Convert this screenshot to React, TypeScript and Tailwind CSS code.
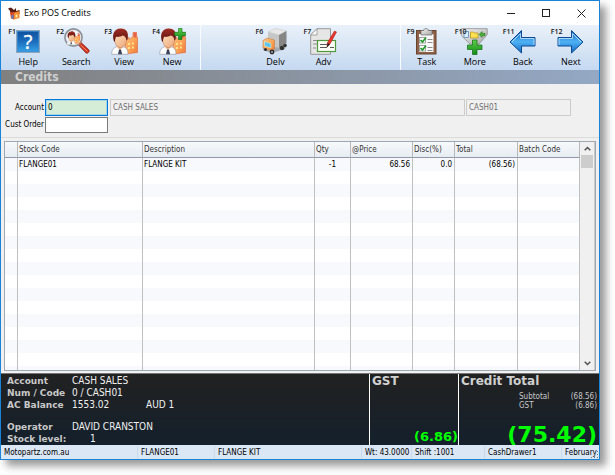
import React from "react";

const tahoma = "font-['DejaVu_Sans_Condensed','DejaVu_Sans',sans-serif]";
const segoe = "font-['Open_Sans','Noto_Sans',sans-serif]";
const verdana = "font-['DejaVu_Sans',sans-serif]";

function Gradients() {
  return (
    <svg width="0" height="0" className="absolute" aria-hidden="true">
      <defs>
        <linearGradient id="blueTile" x1="0" y1="0" x2="0" y2="1">
          <stop offset="0" stopColor="#0f4f9c" />
          <stop offset="0.5" stopColor="#1b6dbd" />
          <stop offset="1" stopColor="#3aa5e8" />
        </linearGradient>
        <linearGradient id="arrowBlue" x1="0" y1="0" x2="0" y2="1">
          <stop offset="0" stopColor="#0f5cb4" />
          <stop offset="0.5" stopColor="#4fb2f5" />
          <stop offset="1" stopColor="#1468c0" />
        </linearGradient>
        <linearGradient id="orange" x1="0" y1="0" x2="1" y2="1">
          <stop offset="0" stopColor="#ffc98a" />
          <stop offset="0.5" stopColor="#fba85a" />
          <stop offset="1" stopColor="#ee7a38" />
        </linearGradient>
        <linearGradient id="skin" x1="0" y1="0" x2="1" y2="1">
          <stop offset="0" stopColor="#ffe0c0" />
          <stop offset="1" stopColor="#eba577" />
        </linearGradient>
        <linearGradient id="hair" x1="0" y1="0" x2="0" y2="1">
          <stop offset="0" stopColor="#a02c24" />
          <stop offset="1" stopColor="#5a1210" />
        </linearGradient>
        <linearGradient id="steel" x1="0" y1="0" x2="1" y2="1">
          <stop offset="0" stopColor="#f4f4f4" />
          <stop offset="1" stopColor="#a8a8a8" />
        </linearGradient>
        <linearGradient id="plus" x1="0" y1="0" x2="0" y2="1">
          <stop offset="0" stopColor="#5fd04a" />
          <stop offset="1" stopColor="#128a18" />
        </linearGradient>
      </defs>
    </svg>
  );
}

function Svg({ children }: { children: React.ReactNode }) {
  return (
    <svg width="27" height="27" viewBox="0 0 27 27" aria-hidden="true">
      {children}
    </svg>
  );
}

function Person() {
  return (
    <g>
      <path d="M14 13l4-4v2.500l4-3V4.500h3.500v4l1 .5v15.500L15 26z" fill="url(#orange)" stroke="#e0683a" strokeWidth="0.600" />
      <path d="M22.500 4.500h3v5h-3z" fill="#e8604a" />
      <path d="M17 15h2v2h-2zM21 14.500h2v2h-2zM17 19h2v2h-2zM21 18.500h2v2h-2z" fill="#ffe08c" />
      <path d="M.7 26.300c0-4.500 1.500-6.300 5.300-7.800h6c3.500 1.300 5 3.300 5 7.800z" fill="#fdfdfd" stroke="#9aa0a8" strokeWidth="0.700" />
      <path d="M5.500 18.500l3.500 3.500 3.500-3.500-1-2.500h-5z" fill="#eeb086" />
      <path d="M8 21.500h2l1.200 4.800H7z" fill="#3c4658" />
      <path d="M3.500 8C3 15 5.500 19.500 9.500 19.500c4 0 6.500-4 6.500-11.500C13 5 6 5 3.500 8z" fill="url(#skin)" stroke="#b8704a" strokeWidth="0.500" />
      <path d="M3 13.500C.5 6 3.500.5 9.500.5c6.500 0 8.500 4.500 7 11l-1 1C15 9.500 14 8 11.500 7.500 9.500 9 7 9 5 8.800 4.500 10.500 4 11.500 4 13.500z" fill="url(#hair)" />
    </g>
  );
}

function HelpIcon() {
  return (
    <Svg>
      <rect x="1.500" y="2.500" width="23" height="22" fill="url(#blueTile)" stroke="#8fa6bd" />
      <rect x="2.500" y="3.500" width="21" height="20" fill="none" stroke="#3e8fd6" strokeWidth="0.700" />
      <text x="13" y="21" textAnchor="middle" fontSize="20" fontFamily="Noto Sans, sans-serif" fill="#fff" stroke="#fff" strokeWidth="0.300">
        ?
      </text>
    </Svg>
  );
}

function SearchIcon() {
  return (
    <Svg>
      <path d="M15.500 17l2.500-2.500 8 7.500c1 1.500-1.500 4-3 3z" fill="#d0301c" stroke="#84190e" strokeWidth="0.700" />
      <path d="M17.500 17l7 6.500" stroke="#f39a7c" />
      <circle cx="10.500" cy="9.500" r="8.500" fill="#eef5fb" stroke="#8a9098" strokeWidth="1.800" />
      <g transform="translate(3.500 3) scale(0.520)">
        <Person />
      </g>
      <circle cx="10.500" cy="9.500" r="7.300" fill="none" stroke="#e3e6ea" strokeWidth="0.900" />
    </Svg>
  );
}

function ViewIcon() {
  return (
    <Svg>
      <Person />
    </Svg>
  );
}

function NewIcon() {
  return (
    <Svg>
      <Person />
      <path d="M19.500.5h3.500v3.800h3.700v3.400H23V11.500h-3.500V7.700h-4V4.300h4z" fill="url(#plus)" stroke="#0f6b14" strokeWidth="0.600" />
    </Svg>
  );
}

function DeliveryIcon() {
  return (
    <Svg>
      <path d="M6 20l17-2 2-3-2 6-13 4z" fill="#6d6d6d" opacity="0.500" />
      <path d="M6 4l8-3.500L24.500 3 17 7z" fill="#e8e8e8" stroke="#b5b5b5" strokeWidth="0.400" />
      <path d="M6 4l11 3v13L6 16z" fill="#c6c6c6" />
      <path d="M17 7l7.500-4v12L17 21z" fill="#868686" />
      <circle cx="20" cy="20" r="2.200" fill="#333" />
      <circle cx="23" cy="17.500" r="1.800" fill="#333" />
      <path d="M1 12.500L5 10l7.500 2v9L9.500 23 1 20z" fill="url(#orange)" stroke="#b87432" strokeWidth="0.500" />
      <path d="M2.500 13.500l6.500 2v4.500l-6.500-2z" fill="#59c6ee" stroke="#fff3c0" strokeWidth="0.500" />
      <path d="M1 20l8.500 3 3-2v2l-3 2L1 22z" fill="#a6a6a6" />
      <circle cx="10" cy="24" r="2.400" fill="#2c2c2c" />
      <circle cx="10" cy="24" r="0.900" fill="#bbb" />
      <circle cx="3.500" cy="21.500" r="1.500" fill="#2c2c2c" />
    </Svg>
  );
}

function AdviceIcon() {
  return (
    <Svg>
      <path d="M7 .7h13.500v25.600H.7V7z" fill="#e6e6e6" stroke="#8f8f8f" strokeWidth="0.900" />
      <path d="M7 .7V7H.7z" fill="#fff" stroke="#8f8f8f" strokeWidth="0.800" />
      <path d="M3 12.500h5M3 16h4M3 20h3" stroke="#8e8e8e" />
      <rect x="7.500" y="12.500" width="18" height="11" fill="#fbfff8" stroke="#4f9a3a" strokeWidth="1.200" />
      <path d="M10 16.500h7M10 19.500h7M20 19.500h4" stroke="#5a5a5a" />
      <path d="M24.500 3l2 1-6.500 12-3 3 .5-4.500z" fill="#e8342c" stroke="#a8150e" strokeWidth="0.500" />
      <path d="M17.500 15l2.400 1.300-3 3.200z" fill="#222" />
    </Svg>
  );
}

function TaskIcon() {
  return (
    <Svg>
      <rect x="3.500" y="2.500" width="19.500" height="23.500" fill="#8f6248" stroke="#68442e" />
      <rect x="6" y="6" width="14.500" height="18" fill="#fafafa" />
      <path d="M8 2.500h2.500C10.500 0 15.500 0 15.500 2.500H19V7H8z" fill="url(#steel)" stroke="#6b6b6b" strokeWidth="0.700" />
      <rect x="6.500" y="9.500" width="6" height="5.500" fill="#fff" stroke="#8d8d8d" strokeWidth="0.800" />
      <rect x="6.500" y="17.500" width="6" height="5.500" fill="#fff" stroke="#8d8d8d" strokeWidth="0.800" />
      <path d="M7.500 12l2 2 3.500-4.500M7.500 20l2 2 3.500-4.500" fill="none" stroke="#1f9a28" strokeWidth="1.700" />
      <path d="M14.500 11.500h5M14.500 14.500h5M14.500 19.500h5M14.500 22.500h5" stroke="#8d8d8d" />
    </Svg>
  );
}

function MoreIcon() {
  return (
    <Svg>
      <path d="M.7.7h25.500v6L18 16H9L.7 8z" fill="url(#steel)" stroke="#8b8b8b" strokeWidth="0.800" />
      <rect x="3" y="3.500" width="4.500" height="6" fill="#d6efff" stroke="#4b7fae" strokeWidth="0.700" />
      <path d="M9.500 4h3l1 1h3.500v5H9.500z" fill="#ffe052" stroke="#b38d12" strokeWidth="0.700" />
      <path d="M18 6.500l3-3v1.800h3v2.500h-3v1.800z" fill="#4cae38" stroke="#1d6d14" strokeWidth="0.500" />
      <path d="M11.500 12h4.500v5h5v4.500h-5v5h-4.500v-5h-5V17h5z" fill="url(#plus)" stroke="#0f6b14" strokeWidth="0.700" />
    </Svg>
  );
}

function BackIcon() {
  return (
    <Svg>
      <path d="M1 14L12.500 2.500V9.500H26v8.500H12.500V25z" fill="url(#arrowBlue)" stroke="#0d4a96" />
      <path d="M3 14l8.500-8.500v5H25v6.500" fill="none" stroke="#c4e6ff" strokeWidth="0.800" />
    </Svg>
  );
}

function NextIcon() {
  return (
    <Svg>
      <path d="M26 14L14.500 2.500V9.500H1v8.500H14.500V25z" fill="url(#arrowBlue)" stroke="#0d4a96" />
      <path d="M2 17v-6.500h13.500v-5L24 14" fill="none" stroke="#c4e6ff" strokeWidth="0.800" />
    </Svg>
  );
}

function AppIcon() {
  return (
    <svg width="12" height="13" viewBox="0 0 12 13" aria-hidden="true">
      <path d="M0 1.500l3-1L6 3l2-2v3l3.500-1v4L3 8 2 4z" fill="#5a1c12" />
      <path d="M2 5.500l4-.5v7.500l-3-1z" fill="#e0482a" />
      <path d="M6 5.500l5.500-1.500v7L6 12.500z" fill="#f08a2c" />
      <path d="M3.500 8h2v3.500h-2z" fill="#4a86c8" />
      <path d="M7.500 7.500h2v3h-2z" fill="#ffe9b0" />
    </svg>
  );
}

type Tool = { fkey: string; label: string; icon: React.ReactNode };

const toolGroups: Tool[][] = [
  [
    { fkey: "F1", label: "Help", icon: <HelpIcon /> },
    { fkey: "F2", label: "Search", icon: <SearchIcon /> },
    { fkey: "F3", label: "View", icon: <ViewIcon /> },
    { fkey: "F4", label: "New", icon: <NewIcon /> },
  ],
  [
    { fkey: "F6", label: "Delv", icon: <DeliveryIcon /> },
    { fkey: "F7", label: "Adv", icon: <AdviceIcon /> },
  ],
  [
    { fkey: "F9", label: "Task", icon: <TaskIcon /> },
    { fkey: "F10", label: "More", icon: <MoreIcon /> },
    { fkey: "F11", label: "Back", icon: <BackIcon /> },
    { fkey: "F12", label: "Next", icon: <NextIcon /> },
  ],
];

function TitleBar() {
  return (
    <header className={`flex h-6 items-center bg-white pl-[7px] text-black ${segoe}`}>
      <AppIcon />
      <h1 className="ml-1 flex-1 text-[9px] leading-3">Exo POS Credits</h1>
      <button type="button" aria-label="Minimize" className="flex w-[35px] justify-center">
        <svg width="9" height="9" viewBox="0 0 9 9"><path d="M0 4.500h8" stroke="#222" /></svg>
      </button>
      <button type="button" aria-label="Maximize" className="flex w-[35px] justify-center">
        <svg width="9" height="9" viewBox="0 0 9 9"><rect x="0.500" y="0.500" width="7" height="7" fill="none" stroke="#222" /></svg>
      </button>
      <button type="button" aria-label="Close" className="flex w-[35px] justify-center">
        <svg width="9" height="9" viewBox="0 0 9 9"><path d="M.5.5l8 8M8.500.5l-8 8" stroke="#222" /></svg>
      </button>
    </header>
  );
}

function Toolbar() {
  return (
    <nav className="flex h-[45px] bg-linear-to-b from-[#e9f1fa] via-[#d8e5f4] to-[#c5d9f1]">
      {toolGroups.map((group, i) => (
        <div
          key={i}
          className="flex flex-1 justify-center border-l border-transparent pr-0.5 [&:not(:first-child)]:border-[#f8fbff]"
        >
          {group.map((tool) => (
            <button key={tool.label} type="button" className="relative flex w-12 flex-col items-center pt-[3px]">
              {tool.icon}
              <span className={`absolute left-1 top-[3px] text-[7px] font-semibold leading-[8px] text-[#111] ${segoe}`}>{tool.fkey}</span>
              <span className={`text-[9px] leading-[14px] text-black ${segoe}`}>{tool.label}</span>
            </button>
          ))}
        </div>
      ))}
    </nav>
  );
}

function AccountForm() {
  return (
    <form className={`h-[53px] pl-px pr-[28px] pt-[15px] text-[8px] text-black ${tahoma}`}>
      <div className="flex items-center">
        <label htmlFor="account" className="w-[43px] pr-px text-right">Account</label>
        <input id="account" defaultValue="0" className="h-[17px] w-[63px] border border-[#0078d7] bg-[#d5ecd6] px-0.5 shadow-[inset_0_0_0_1px_#a6d3e6] outline-none" />
        <input aria-label="Account name" readOnly defaultValue="CASH SALES" className="ml-0.5 h-[17px] min-w-0 flex-1 border border-[#ccc] bg-[#f0f0f0] px-0.5 text-[#6d6d6d]" />
        <input aria-label="Account code" readOnly defaultValue="CASH01" className="ml-px h-[17px] w-[105px] border border-[#ccc] bg-[#f0f0f0] px-0.5 text-[#6d6d6d]" />
      </div>
      <div className="flex items-center pt-px">
        <label htmlFor="custOrder" className="w-[43px] whitespace-nowrap pr-px text-right">Cust Order</label>
        <input id="custOrder" defaultValue="" className="h-4 w-[63px] border border-[#7a7a7a] bg-white px-0.5" />
      </div>
    </form>
  );
}

const columns = [
  { title: "", width: "w-[13px]" },
  { title: "Stock Code", width: "w-[125px]" },
  { title: "Description", width: "w-auto" },
  { title: "Qty", width: "w-[36px]" },
  { title: "@Price", width: "w-[62px]" },
  { title: "Disc(%)", width: "w-[42px]" },
  { title: "Total", width: "w-[63px]" },
  { title: "Batch Code", width: "w-[62px]" },
];

const rows: string[][] = [["", "FLANGE01", "FLANGE KIT", "-1", "68.56", "0.0", "(68.56)", ""]];
const blankRow = ["", "", "", "", "", "", "", ""];
const rowCount = 17;

function cellAlign(column: number) {
  if (column === 3) return "pr-[14px] text-right";
  return column > 3 ? "pr-0.5 text-right" : "text-left";
}

function StockGrid() {
  return (
    <div className="mx-[3px] flex h-[230px] border border-[#a0a8b4] bg-white">
      <div className="min-w-0 flex-1 overflow-hidden">
        <table className={`w-full table-fixed border-separate border-spacing-0 text-[8px] leading-3 text-black ${tahoma}`}>
          <thead>
            <tr className="h-[16px] bg-linear-to-b from-[#f7f9fb] to-[#e6ecf2]">
              {columns.map((c, i) => (
                <th
                  key={i}
                  scope="col"
                  className={`whitespace-nowrap border-b border-r border-b-[#8f99a8] border-r-[#b8b8b8] p-0 pl-px pt-px text-left align-middle font-normal text-[#333] ${c.width}`}
                >
                  {c.title}
                </th>
              ))}
            </tr>
          </thead>
          <tbody>
            {Array.from({ length: rowCount }, (_, r) => (
              <tr key={r} className="h-[13px] odd:bg-[#f7f9fc]">
                {(rows[r] ?? blankRow).map((value, c) => (
                  <td key={c} className={`h-[13px] whitespace-nowrap border-r border-[#c0c0c0] p-0 pl-px ${cellAlign(c)}`}>
                    {value}
                  </td>
                ))}
              </tr>
            ))}
          </tbody>
        </table>
      </div>
      <div className="flex w-[15px] flex-col items-center border-r border-[#c8c8c8] bg-[#f0f0f0] text-[#505050]">
        <button type="button" aria-label="Scroll up" className="flex h-[13px] items-center">
          <svg width="7" height="5" viewBox="0 0 7 5"><path d="M.7 4.300L3.500 1.500l2.800 2.800" fill="none" stroke="currentColor" strokeWidth="1.500" /></svg>
        </button>
        <div className="h-[13px] w-3 bg-[#cdcdcd]" />
        <div className="flex-1" />
        <button type="button" aria-label="Scroll down" className="flex h-[13px] items-center">
          <svg width="7" height="5" viewBox="0 0 7 5"><path d="M.7.7l2.800 2.800L6.300.7" fill="none" stroke="currentColor" strokeWidth="1.500" /></svg>
        </button>
      </div>
    </div>
  );
}

function Detail({ label, className = "", children }: { label: string; className?: string; children: React.ReactNode }) {
  return (
    <div className={`flex h-3 items-center leading-3 ${className}`}>
      <dt className={`w-[65px] whitespace-nowrap text-[9px] font-bold text-[#c8c8c8] ${verdana}`}>{label}</dt>
      <dd className={`flex whitespace-pre text-[10px] text-[#f0f0f0] ${tahoma}`}>{children}</dd>
    </div>
  );
}

function Summary() {
  return (
    <section className="flex h-[72px] border-t border-[#777] bg-linear-to-b from-[#212121] to-[#14202c]">
      <dl className="min-w-0 flex-1 pl-1.5 pt-px">
        <Detail label="Account">CASH SALES</Detail>
        <Detail label="Num / Code">0 / CASH01</Detail>
        <Detail label="AC Balance">
          <span className="w-[74px]">1553.02</span>
          <span>AUD 1</span>
        </Detail>
        <Detail label="Operator" className="mt-2.5">DAVID CRANSTON</Detail>
        <Detail label="Stock level:">
          <span className="pl-[18px]">1</span>
        </Detail>
      </dl>
      <div className={`flex w-[89px] flex-col justify-between border-l border-white pl-0.5 ${verdana}`}>
        <h2 className="text-[12px] font-bold leading-[15px] text-[#d0d0d0]">GST</h2>
        <p className="text-right text-[13px] font-bold leading-[16px] text-[#00ff00]">(6.86)</p>
      </div>
      <div className={`flex w-[141px] flex-col border-l border-white pl-0.5 pr-0.5 ${verdana}`}>
        <h2 className="text-[12px] font-bold leading-[15px] text-[#d0d0d0]">Credit Total</h2>
        <dl className={`grid grid-cols-[1fr_auto] pl-[58px] pt-[3px] text-[8px] leading-[9px] text-[#c8c8c8] ${tahoma}`}>
          <dt>Subtotal</dt>
          <dd className="text-right">(68.56)</dd>
          <dt>GST</dt>
          <dd className="text-right">(6.86)</dd>
        </dl>
        <p className="mt-auto text-right text-[22px] font-bold leading-[20px] text-[#00ff00]">(75.42)</p>
      </div>
    </section>
  );
}

function StatusBar() {
  const cell = "whitespace-nowrap border-r border-[#cbd8e8] pl-[3px]";
  return (
    <footer className={`relative flex h-[14px] items-center bg-[#dbe7f5] text-[8px] leading-[13px] text-black ${tahoma}`}>
      <span className={`w-[137px] ${cell}`}>Motopartz.com.au</span>
      <span className={`w-[77px] ${cell}`}>FLANGE01</span>
      <span className={`min-w-0 flex-1 ${cell}`}>FLANGE KIT</span>
      <span className={`w-[50px] ${cell}`}>Wt: 43.0000</span>
      <span className={`w-[73px] ${cell}`}>Shift :1001</span>
      <span className={`w-[77px] ${cell}`}>CashDrawer1</span>
      <span className="w-[37px] whitespace-nowrap pl-[3px]">February</span>
      <svg className="absolute bottom-0 right-0" width="8" height="8" viewBox="0 0 8 8" aria-hidden="true">
        <path d="M6 0h1v1H6zM3 3h1v1H3zM6 3h1v1H6zM0 6h1v1H0zM3 6h1v1H3zM6 6h1v1H6z" fill="#777" />
      </svg>
    </footer>
  );
}

export default function App() {
  return (
    <div className="bg-white pb-[15px] pr-[15px]">
      <Gradients />
      <main className="border border-[#1883d7] bg-[#f0f0f0] shadow-[6px_6px_8px_rgba(0,0,0,0.4)]">
        <TitleBar />
        <Toolbar />
        <h2 className={`h-[14px] bg-linear-to-r from-[#808080] to-[#94a8c4] pl-[14px] text-[12px] font-bold leading-[14px] text-[#d0d0d0] ${tahoma}`}>
          Credits
        </h2>
        <AccountForm />
        <div className="mb-[3px] border-t border-[#dcdcdc]" />
        <StockGrid />
        <div className="h-0.5" />
        <Summary />
        <StatusBar />
      </main>
    </div>
  );
}
